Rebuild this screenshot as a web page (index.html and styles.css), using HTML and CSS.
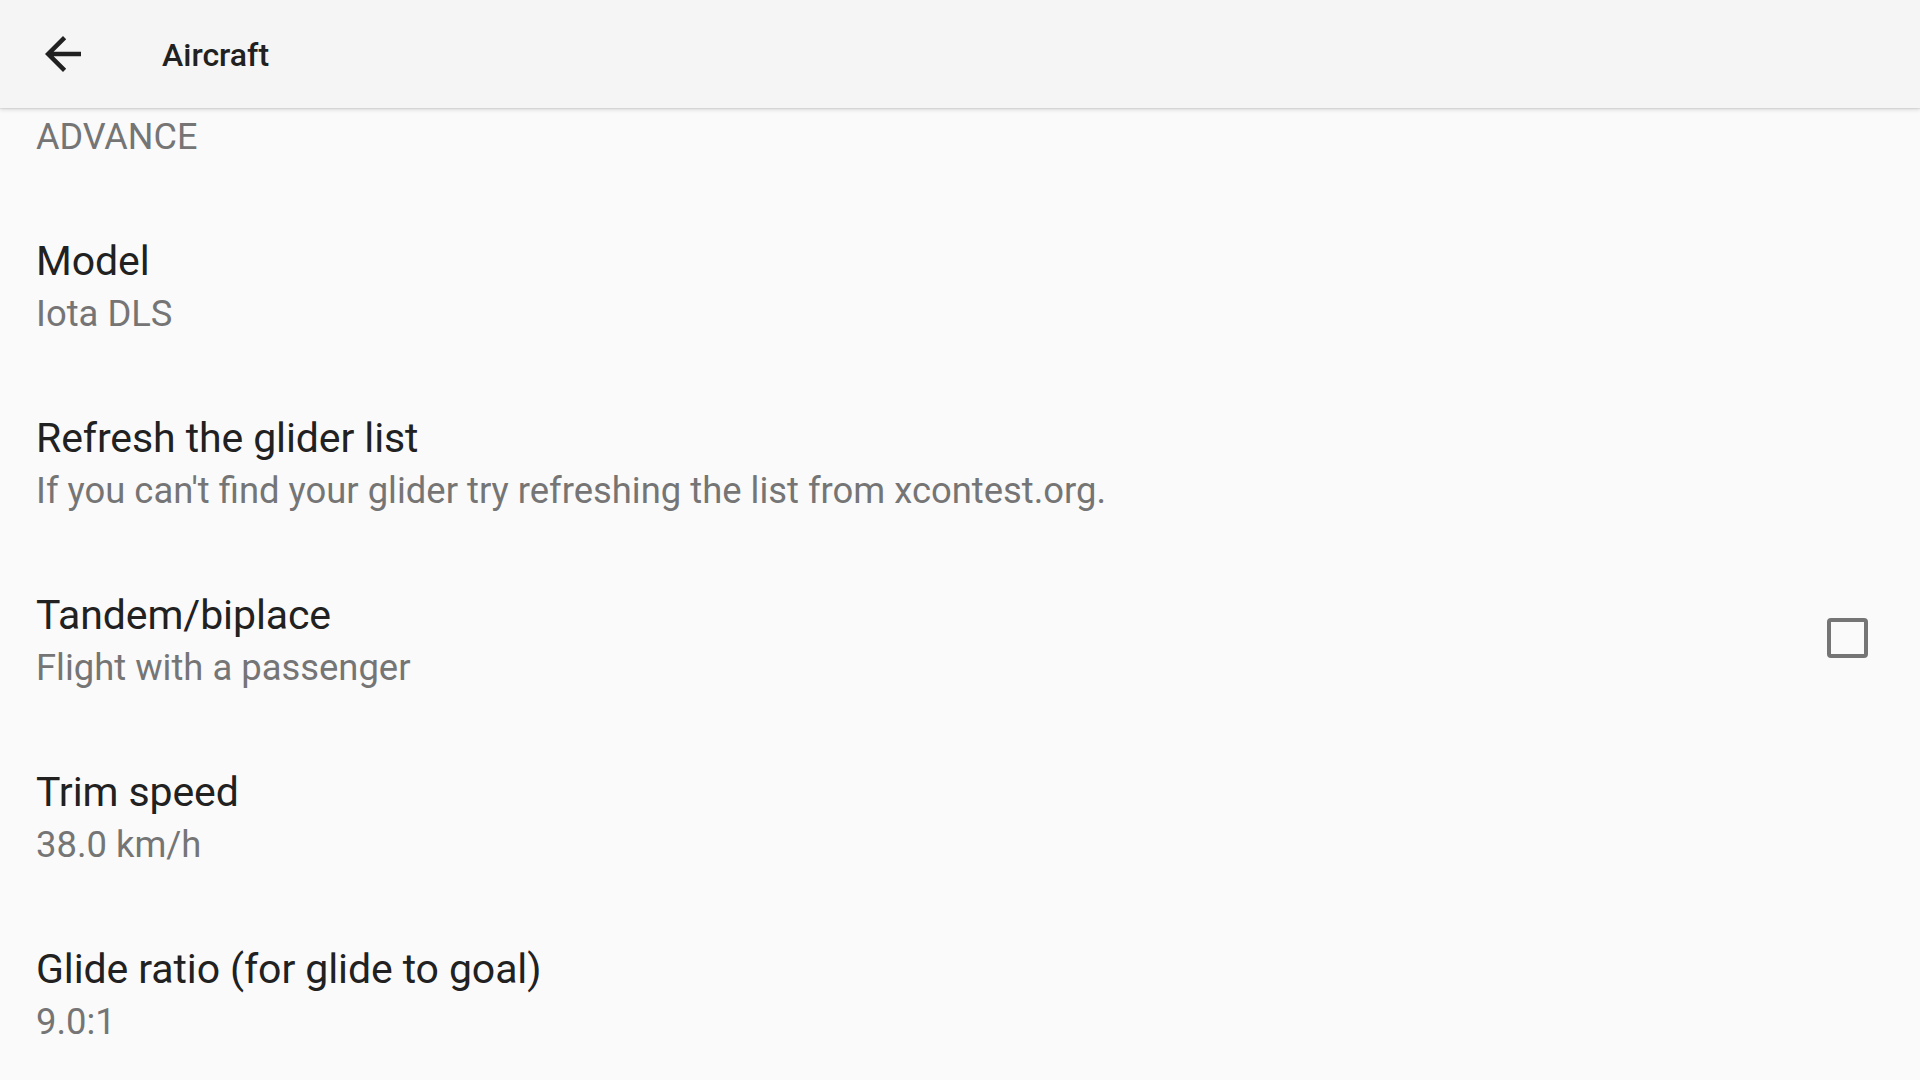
FILE: index.html
```html
<!DOCTYPE html>
<html lang="en">
<head>
    <meta charset="UTF-8">
    <title>Aircraft</title>
    <link rel="stylesheet" href="styles.css">
</head>
<body>
    <header class="toolbar">
        <button class="back" aria-label="Back">
            <svg viewBox="0 0 24 24" width="54" height="54">
                <path d="M20 11H7.83l5.59-5.59L12 4l-8 8 8 8 1.41-1.41L7.83 13H20v-2z" fill="#212121"/>
            </svg>
        </button>
        <h1 class="toolbar-title">Aircraft</h1>
    </header>

    <main class="prefs">
        <div class="category">ADVANCE</div>

        <div class="pref">
            <div class="pref-text">
                <div class="pref-title">Model</div>
                <div class="pref-summary">Iota DLS</div>
            </div>
        </div>

        <div class="pref">
            <div class="pref-text">
                <div class="pref-title">Refresh the glider list</div>
                <div class="pref-summary">If you can't find your glider try refreshing the list from xcontest.org.</div>
            </div>
        </div>

        <div class="pref">
            <div class="pref-text">
                <div class="pref-title">Tandem/biplace</div>
                <div class="pref-summary">Flight with a passenger</div>
            </div>
            <span class="checkbox"></span>
        </div>

        <div class="pref">
            <div class="pref-text">
                <div class="pref-title">Trim speed</div>
                <div class="pref-summary">38.0 km/h</div>
            </div>
        </div>

        <div class="pref">
            <div class="pref-text">
                <div class="pref-title">Glide ratio (for glide to goal)</div>
                <div class="pref-summary">9.0:1</div>
            </div>
        </div>
    </main>
</body>
</html>
```

FILE: styles.css
```css
* {
    box-sizing: border-box;
    margin: 0;
    padding: 0;
}

body {
    height: 100vh;
    overflow: hidden;
    background: #fafafa;
    font-family: Roboto, "Noto Sans", sans-serif;
    color: #212121;
}

.toolbar {
    position: relative;
    z-index: 2;
    height: 108px;
    display: flex;
    align-items: center;
    background: #f5f5f5;
    box-shadow: 0 2px 4px rgba(0, 0, 0, 0.12), 0 1px 1px rgba(0, 0, 0, 0.06);
}

.back {
    width: 54px;
    height: 54px;
    margin-left: 36px;
    border: none;
    background: none;
    display: flex;
}

.toolbar-title {
    margin: 2px 0 0 72px;
    font-size: 32px;
    font-weight: 500;
    line-height: 40px;
    color: #212121;
}

.prefs {
    display: flex;
    flex-direction: column;
}

.category {
    padding: 3px 36px 35px;
    font-size: 36px;
    line-height: 52px;
    color: #757575;
}

.pref {
    height: 177px;
    padding: 0 52px 0 36px;
    display: flex;
    align-items: center;
}

.pref-text {
    flex: 1;
}

.pref-title {
    font-size: 41px;
    line-height: 54px;
    letter-spacing: -0.1px;
    color: #212121;
}

.pref-summary {
    font-size: 36.4px;
    line-height: 52px;
    color: #757575;
}

.checkbox {
    width: 41px;
    height: 40px;
    margin-top: -6px;
    border: 4px solid #757575;
    border-radius: 4px;
}
```
